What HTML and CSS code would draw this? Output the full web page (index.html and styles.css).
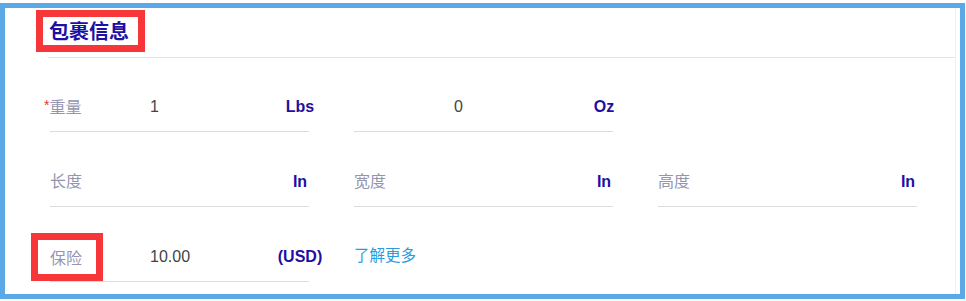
FILE: index.html
```html
<!DOCTYPE html>
<html lang="zh-CN">
<head>
    <meta charset="UTF-8">
    <meta name="viewport" content="width=device-width, initial-scale=1.0">
    <title>包裹信息</title>
    <link rel="stylesheet" href="styles.css">
</head>
<body>
    <div class="frame">
        <div class="panel">
            <div class="panel-head">
                <h2 class="mark title">包裹信息</h2>
            </div>

            <div class="form-grid">
                <div class="field">
                    <span class="label"><em class="req">*</em>重量</span>
                    <span class="value">1</span>
                    <span class="unit">Lbs</span>
                </div>
                <div class="field">
                    <span class="label"></span>
                    <span class="value">0</span>
                    <span class="unit">Oz</span>
                </div>
                <div class="spacer"></div>

                <div class="field">
                    <span class="label">长度</span>
                    <span class="value"></span>
                    <span class="unit">In</span>
                </div>
                <div class="field">
                    <span class="label">宽度</span>
                    <span class="value"></span>
                    <span class="unit">In</span>
                </div>
                <div class="field">
                    <span class="label">高度</span>
                    <span class="value"></span>
                    <span class="unit">In</span>
                </div>

                <div class="field">
                    <span class="label"><span class="mark label-mark">保险</span></span>
                    <span class="value">10.00</span>
                    <span class="unit">(USD)</span>
                </div>
                <div class="more">
                    <a href="#">了解更多</a>
                </div>
            </div>
        </div>
    </div>
</body>
</html>
```

FILE: styles.css
```css
body {
    margin: 0;
    background: #fff;
    font-family: "Liberation Sans", "Noto Sans CJK SC", sans-serif;
}
.frame {
    margin: 3px 1px 0 0;
    height: 296px;
    box-sizing: border-box;
    border: 5px solid #5aa9e6;
    background: #fff;
}
.panel {
    margin: 0 4px 0 43px;
    height: 100%;
    border-right: 1px solid #f0f0f0;
}
.panel-head {
    padding: 2px 0 5px;
    border-bottom: 1px solid #e3e3ea;
}
/* red annotation boxes */
.mark {
    display: inline-block;
    border: 7px solid #f7363a;
}
.title {
    margin: 0 0 0 -12px;
    padding: 0 9px 0 6px;
    font-family: "Noto Sans CJK SC", sans-serif;
    font-size: 20px;
    line-height: 28px;
    font-weight: 700;
    color: #1d10a3;
}
.form-grid {
    display: grid;
    grid-template-columns: 259px 259px 259px;
    column-gap: 45px;
    row-gap: 24px;
    padding: 23px 0 0 2px;
}
.field {
    display: flex;
    align-items: center;
    height: 51px;
    box-sizing: border-box;
    border-bottom: 1px solid #dcdcdc;
}
.label {
    width: 100px;
    flex: none;
    position: relative;
    top: -1px;
    font-family: "Noto Sans CJK SC", sans-serif;
    font-size: 16px;
    line-height: 20px;
    color: #9595b0;
}
.req {
    font-style: normal;
    color: #e8352f;
    margin-left: -6px;
    font-family: "Liberation Sans", sans-serif;
    font-size: 14px;
    vertical-align: 3px;
}
.label-mark {
    margin: 0 0 0 -19px;
    padding: 7px 14px 7px 12px;
    position: relative;
    top: 2px;
}
.value {
    flex: 1;
    position: relative;
    top: 1px;
    font-size: 16px;
    color: #444;
}
.unit {
    width: 16px;
    flex: none;
    display: flex;
    justify-content: center;
    white-space: nowrap;
    font-size: 16px;
    font-weight: 700;
    color: #1f0fa0;
    position: relative;
    left: -1px;
    top: 1px;
}
.more {
    display: flex;
    align-items: center;
    height: 51px;
}
.more a {
    font-family: "Noto Sans CJK SC", sans-serif;
    font-size: 15.5px;
    color: #2a9bdc;
    text-decoration: none;
    margin-top: -5px;
}
```
